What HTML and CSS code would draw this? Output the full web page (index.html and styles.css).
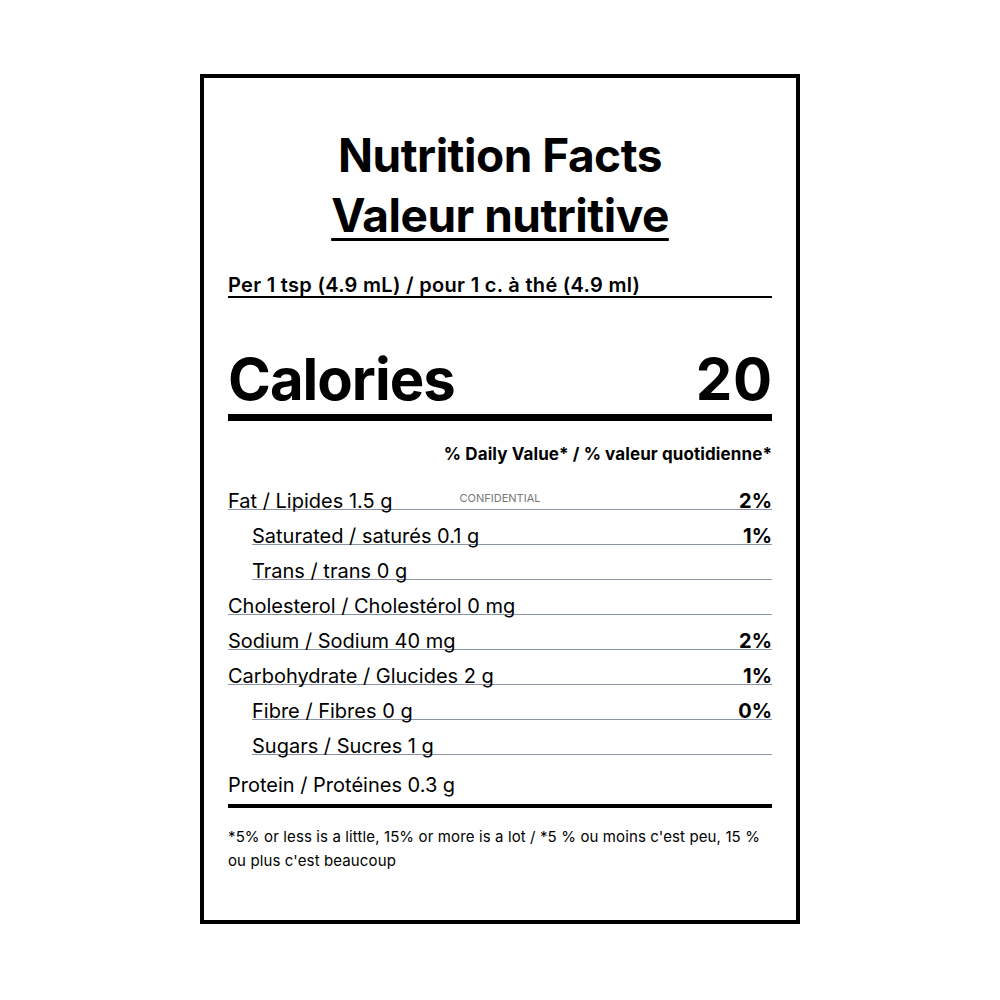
FILE: index.html
```html
<!DOCTYPE html>
<html lang="en">
<head>
<meta charset="utf-8">
<title>Nutrition Facts</title>
<link rel="stylesheet" href="styles.css">
</head>
<body>
<div class="label">
  <div class="watermark">CONFIDENTIAL</div>
  <h1 class="title">
    <span class="title-line">Nutrition Facts</span>
    <span class="title-line title-fr">Valeur nutritive</span>
  </h1>
  <div class="serving">Per 1 tsp (4.9 mL) / pour 1 c. à thé (4.9 ml)</div>
  <div class="calories"><span class="cal-name">Calories</span><span class="cal-value">20</span></div>
  <div class="dv-head">% Daily Value* / % valeur quotidienne*</div>
  <div class="rows">
    <div class="row"><span>Fat / Lipides 1.5 g</span><span class="pct">2%</span></div>
    <div class="row sub"><span>Saturated / saturés 0.1 g</span><span class="pct">1%</span></div>
    <div class="row sub"><span>Trans / trans 0 g</span></div>
    <div class="row"><span>Cholesterol / Cholestérol 0 mg</span></div>
    <div class="row"><span>Sodium / Sodium 40 mg</span><span class="pct">2%</span></div>
    <div class="row"><span>Carbohydrate / Glucides 2 g</span><span class="pct">1%</span></div>
    <div class="row sub"><span>Fibre / Fibres 0 g</span><span class="pct">0%</span></div>
    <div class="row sub"><span>Sugars / Sucres 1 g</span></div>
    <div class="row last"><span>Protein / Protéines 0.3 g</span></div>
  </div>
  <p class="footnote">*5% or less is a little, 15% or more is a lot / *5 % ou moins c'est peu, 15 % ou plus c'est beaucoup</p>
</div>
</body>
</html>
```

FILE: styles.css
```css
* { box-sizing: border-box; }

body {
  margin: 0;
  background: #fff;
  font-family: Inter, "Liberation Sans", sans-serif;
  color: #000;
}

.label {
  position: relative;
  width: 600px;
  height: 850px;
  margin: 74px auto 0;
  border: 4px solid #000;
  padding: 47px 24px 0;
}

.watermark {
  position: absolute;
  top: 413px;
  left: 50%;
  transform: translateX(-50%);
  font-size: 11px;
  line-height: 14px;
  color: #777;
}

.title {
  margin: 0;
  display: flex;
  flex-direction: column;
  align-items: center;
  font-size: 46px;
  font-weight: 700;
  line-height: 60px;
  letter-spacing: -0.5px;
}

.title-fr {
  text-decoration: underline;
  text-decoration-thickness: 3px;
  text-underline-offset: 6px;
}

.serving {
  margin-top: 29px;
  font-size: 20px;
  font-weight: 600;
  line-height: 22px;
  letter-spacing: 0.3px;
  border-bottom: 2px solid #000;
}

.calories {
  margin-top: 52px;
  display: flex;
  justify-content: space-between;
  font-size: 58px;
  font-weight: 700;
  line-height: 58px;
  padding-bottom: 6px;
  border-bottom: 7px solid #000;
}

.cal-name { letter-spacing: -1px; }

.cal-value { letter-spacing: 0.5px; margin-right: -0.5px; }

.dv-head {
  margin-top: 23px;
  text-align: right;
  font-size: 17px;
  font-weight: 700;
  line-height: 20px;
  letter-spacing: 0.1px;
}

.rows {
  margin-top: 29px;
  display: flex;
  flex-direction: column;
  gap: 18px;
}

.row {
  display: flex;
  justify-content: space-between;
  font-size: 20px;
  line-height: 16px;
  border-bottom: 1px solid #8a94a6;
}

.row.sub { margin-left: 24px; }

.row .pct { font-weight: 700; }

.row.last {
  margin-top: 2px;
  line-height: 20px;
  padding-bottom: 9px;
  border-bottom: 4px solid #000;
}

.footnote {
  margin: 17px 0 0;
  font-size: 15px;
  line-height: 24px;
  letter-spacing: 0.12px;
}
```
